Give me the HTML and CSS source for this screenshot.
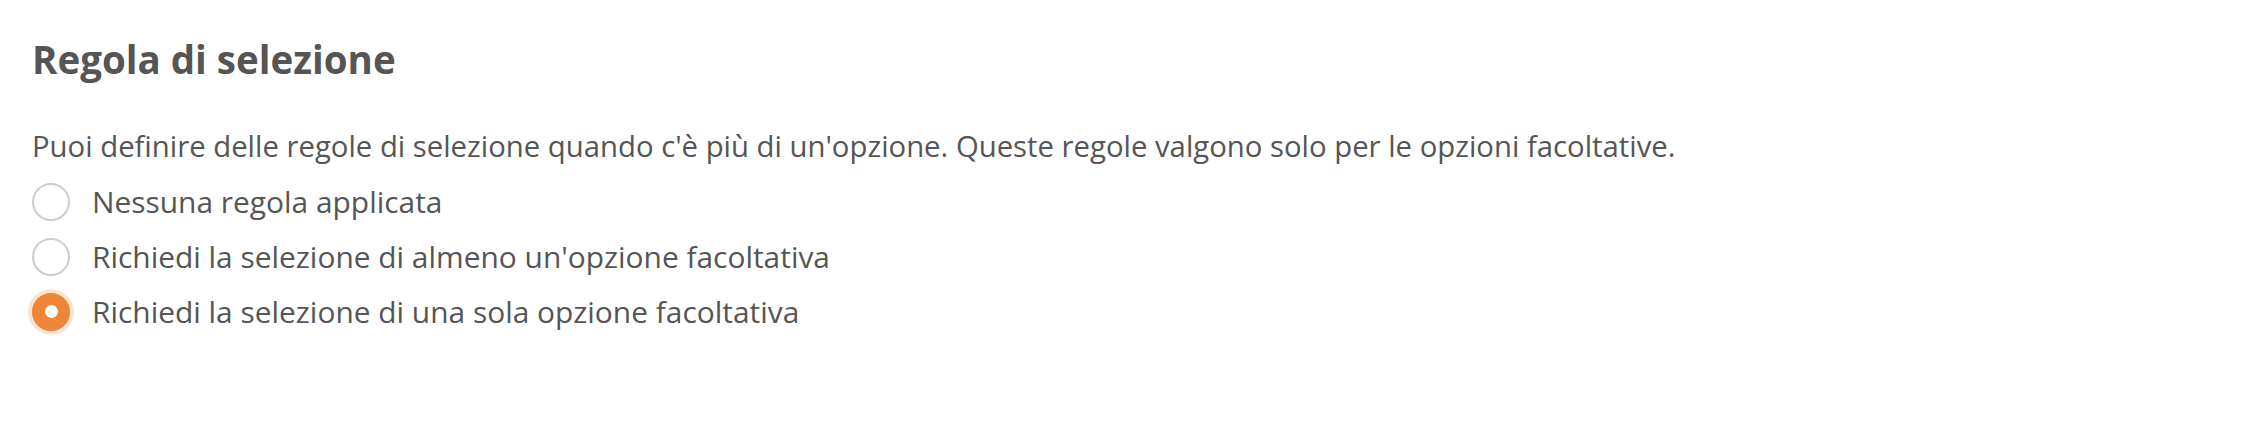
FILE: index.html
```html
<!DOCTYPE html>
<html lang="it">
<head>
    <meta charset="UTF-8">
    <meta name="viewport" content="width=device-width, initial-scale=1.0">
    <title>Regola di selezione</title>
    <link rel="stylesheet" href="styles.css">
</head>
<body>
    <section class="rule-panel">
        <h2 class="rule-title">Regola di selezione</h2>

        <p class="rule-help">Puoi definire delle regole di selezione quando c'è più di un'opzione. Queste regole valgono solo per le opzioni facoltative.</p>

        <!-- Selection rule choices -->
        <div class="rule-options">
            <label class="radio-option">
                <input type="radio" name="rule" value="none">
                <span class="radio-mark"></span>
                <span class="radio-text">Nessuna regola applicata</span>
            </label>
            <label class="radio-option">
                <input type="radio" name="rule" value="at-least-one">
                <span class="radio-mark"></span>
                <span class="radio-text">Richiedi la selezione di almeno un'opzione facoltativa</span>
            </label>
            <label class="radio-option">
                <input type="radio" name="rule" value="only-one" checked>
                <span class="radio-mark"></span>
                <span class="radio-text">Richiedi la selezione di una sola opzione facoltativa</span>
            </label>
        </div>
    </section>
</body>
</html>
```

FILE: styles.css
```css
body {
    font-family: 'Open Sans', 'Noto Sans', sans-serif;
    margin: 0;
    padding: 0;
    background-color: #fff;
    color: #555;
}

.rule-panel {
    padding: 35px 32px;
}

.rule-title {
    font-size: 38.5px;
    font-weight: 700;
    line-height: 48px;
    margin: 0 0 47px 0;
    color: #555;
}

.rule-help {
    font-size: 29.3px;
    line-height: 32px;
    margin: 0 0 12px 0;
}

/* Radio list */
.rule-options {
    display: flex;
    flex-direction: column;
}

.radio-option {
    display: flex;
    align-items: center;
    gap: 22px;
    height: 55px;
    font-size: 29.9px;
    cursor: pointer;
}

.radio-option input {
    display: none;
}

.radio-mark {
    width: 38px;
    height: 38px;
    box-sizing: border-box;
    border: 2px solid #c9ced5;
    border-radius: 50%;
    flex: 0 0 auto;
    display: flex;
    align-items: center;
    justify-content: center;
}

.radio-option input:checked + .radio-mark {
    background-color: #ee8538;
    border-color: #ee8538;
    box-shadow: 0 0 0 4px rgba(238, 133, 56, 0.22);
}

.radio-option input:checked + .radio-mark::after {
    content: "";
    width: 13px;
    height: 13px;
    border-radius: 50%;
    background-color: #fff;
}
```
